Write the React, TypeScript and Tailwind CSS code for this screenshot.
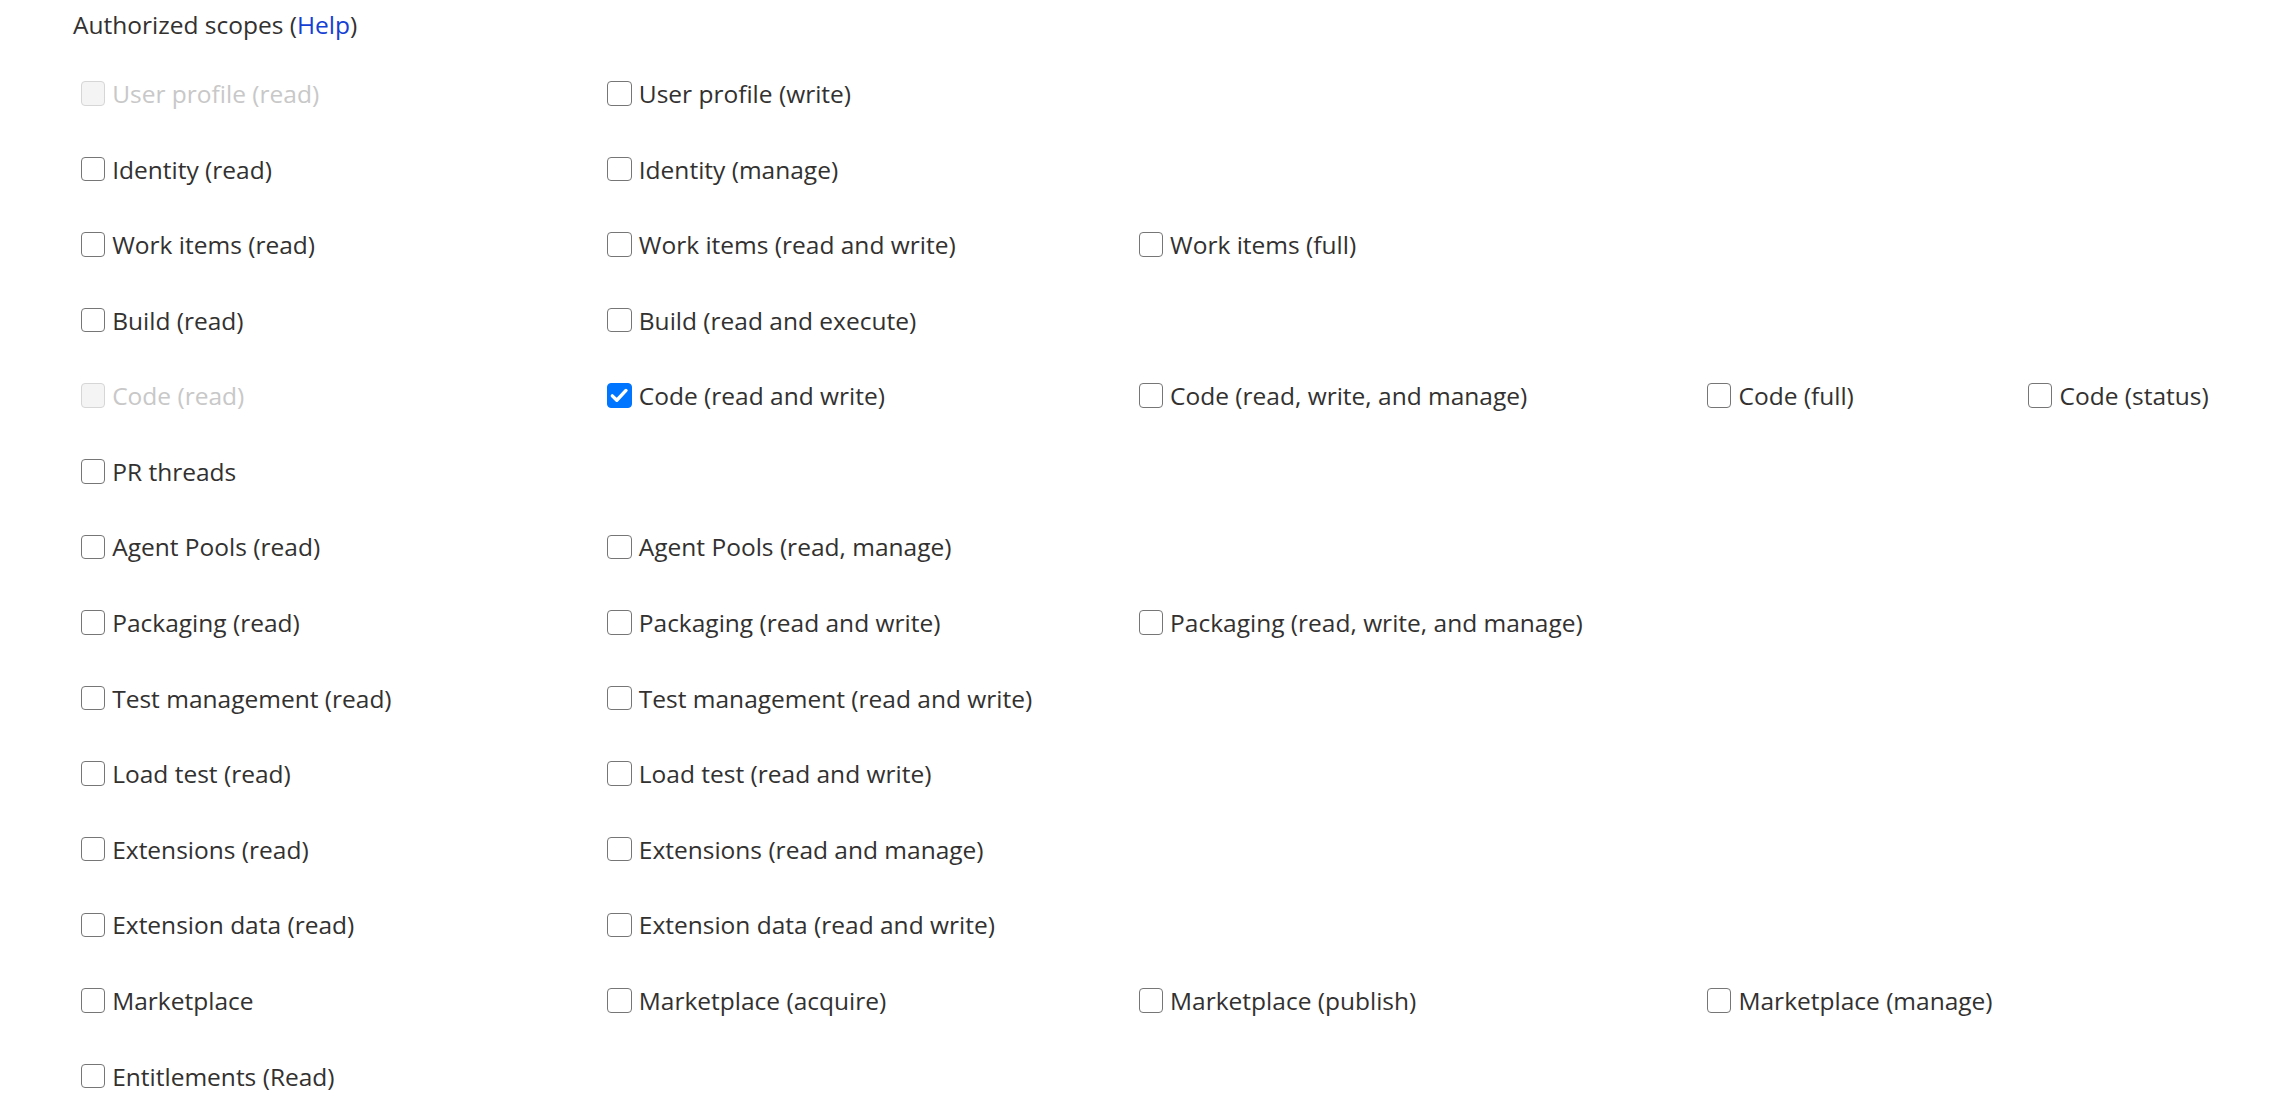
type Scope = { label: string; col: number; checked?: boolean; disabled?: boolean }

const ROWS: Scope[][] = [
  [
    { label: 'User profile (read)', col: 0, disabled: true },
    { label: 'User profile (write)', col: 1 },
  ],
  [
    { label: 'Identity (read)', col: 0 },
    { label: 'Identity (manage)', col: 1 },
  ],
  [
    { label: 'Work items (read)', col: 0 },
    { label: 'Work items (read and write)', col: 1 },
    { label: 'Work items (full)', col: 2 },
  ],
  [
    { label: 'Build (read)', col: 0 },
    { label: 'Build (read and execute)', col: 1 },
  ],
  [
    { label: 'Code (read)', col: 0, disabled: true },
    { label: 'Code (read and write)', col: 1, checked: true },
    { label: 'Code (read, write, and manage)', col: 2 },
    { label: 'Code (full)', col: 3 },
    { label: 'Code (status)', col: 4 },
  ],
  [{ label: 'PR threads', col: 0 }],
  [
    { label: 'Agent Pools (read)', col: 0 },
    { label: 'Agent Pools (read, manage)', col: 1 },
  ],
  [
    { label: 'Packaging (read)', col: 0 },
    { label: 'Packaging (read and write)', col: 1 },
    { label: 'Packaging (read, write, and manage)', col: 2 },
  ],
  [
    { label: 'Test management (read)', col: 0 },
    { label: 'Test management (read and write)', col: 1 },
  ],
  [
    { label: 'Load test (read)', col: 0 },
    { label: 'Load test (read and write)', col: 1 },
  ],
  [
    { label: 'Extensions (read)', col: 0 },
    { label: 'Extensions (read and manage)', col: 1 },
  ],
  [
    { label: 'Extension data (read)', col: 0 },
    { label: 'Extension data (read and write)', col: 1 },
  ],
  [
    { label: 'Marketplace', col: 0 },
    { label: 'Marketplace (acquire)', col: 1 },
    { label: 'Marketplace (publish)', col: 2 },
    { label: 'Marketplace (manage)', col: 3 },
  ],
  [{ label: 'Entitlements (Read)', col: 0 }],
]

const COL_START = ['col-start-1', 'col-start-2', 'col-start-3', 'col-start-4', 'col-start-5']

function ScopeCheckbox({ scope }: { scope: Scope }) {
  const box = scope.disabled
    ? 'border-[#d6d6d6] bg-[#f4f4f4]'
    : scope.checked
      ? 'border-[#0075ff] bg-[#0075ff]'
      : 'border-[#767676] bg-white'
  return (
    <label className={`${COL_START[scope.col]} flex items-center`}>
      <span className="relative flex h-[24.5px] w-[24.5px] shrink-0">
        <input
          type="checkbox"
          defaultChecked={scope.checked}
          disabled={scope.disabled}
          className={`m-0 h-full w-full appearance-none rounded-[4px] border-[1.75px] ${box}`}
        />
        {scope.checked && (
          <svg viewBox="0 0 24 24" className="pointer-events-none absolute inset-0 h-full w-full">
            <path d="M5.2 12.6l4.4 4.3 9-9.6" fill="none" stroke="white" strokeWidth="3.3" strokeLinecap="round" strokeLinejoin="round" />
          </svg>
        )}
      </span>
      <span className={`ml-[7px] mt-[2px] whitespace-nowrap ${scope.disabled ? 'text-[#c8c8c8]' : 'text-[#323130]'}`}>
        {scope.label}
      </span>
    </label>
  )
}

export default function App() {
  return (
    <div className="min-h-screen bg-white pl-[73px] pt-[8px] font-['Open_Sans',sans-serif] text-[24.5px] text-[#323130]">
      <div className="leading-[34px]">
        Authorized scopes (<a href="#" className="text-[#1540d4]">Help</a>)
      </div>
      <div className="mt-[13.5px] grid grid-cols-[526.6px_531.3px_568.4px_321px_auto] pl-[7.7px]">
        {ROWS.map((row, i) => (
          <div key={i} className="col-span-5 grid h-[75.6px] grid-cols-subgrid items-center">
            {row.map((s) => (
              <ScopeCheckbox key={s.label} scope={s} />
            ))}
          </div>
        ))}
      </div>
    </div>
  )
}
